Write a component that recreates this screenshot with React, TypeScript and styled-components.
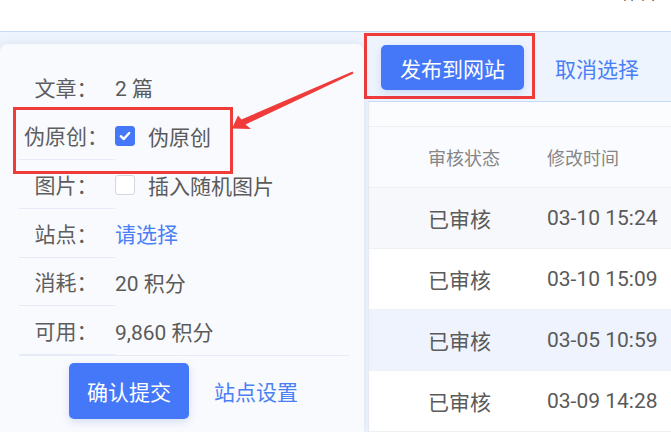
import React from 'react'
import styled, { createGlobalStyle } from 'styled-components'

const GlobalStyle = createGlobalStyle`
  html, body {
    margin: 0;
    padding: 0;
  }
  body {
    width: 671px;
    height: 432px;
    overflow: hidden;
    background: #eef4fd;
    font-family: Roboto, "Noto Sans CJK SC", sans-serif;
  }
  * { box-sizing: border-box; }
`

const Page = styled.div`
  position: relative;
  width: 671px;
  height: 432px;
  overflow: hidden;
  display: flex;
  flex-direction: column;
`

const TopBar = styled.div`
  height: 32px;
  flex-shrink: 0;
  background: #ffffff;
  border-bottom: 1px solid #c7d9f4;
  display: flex;
  justify-content: flex-end;
  padding-right: 14px;
  overflow: hidden;
`

const TopLink = styled.span`
  font-size: 18px;
  line-height: 20px;
  margin-top: -17px;
  color: #333;
`

const Body = styled.div`
  flex: 1;
  min-height: 0;
  display: grid;
  grid-template-columns: 364px 1fr;
  grid-template-rows: 69px 1fr;
`

const Toolbar = styled.div`
  grid-column: 2;
  grid-row: 1;
  display: flex;
  align-items: flex-start;
  padding-top: 1px;
  gap: 20px;
`

const Highlight = styled.div`
  border: 3px solid #f03b3b;
  padding: 9px 8px 6px 14px;
`

const Button = styled.button<{ $h: number; $pad: number }>`
  height: ${p => p.$h}px;
  padding: 0 ${p => p.$pad}px;
  border: none;
  border-radius: 5px;
  background: #4578f9;
  color: #ffffff;
  font-family: inherit;
  font-size: 21px;
  box-shadow: 0 3px 8px rgba(60, 100, 200, 0.18);
  cursor: pointer;
`

const LinkText = styled.span`
  color: #4a7ff5;
  font-size: 21px;
  cursor: pointer;
`

const CancelLink = styled(LinkText)`
  align-self: center;
  margin-top: 2px;
`

const Popover = styled.div`
  grid-column: 1;
  grid-row: 1 / span 2;
  margin-top: 12px;
  z-index: 2;
  background: #f9fafe;
  border-radius: 8px 8px 0 0;
  box-shadow: 0 0 8px rgba(40, 70, 130, 0.1);
  padding: 19px 15px 0 19px;
`

const InfoRow = styled.div<{ $marked?: boolean }>`
  position: relative;
  display: grid;
  grid-template-columns: 96px 1fr;
  align-items: center;
  height: 48.67px;

  &::after {
    content: '';
    display: ${p => (p.$marked ? 'block' : 'none')};
    position: absolute;
    left: -6px;
    top: -5px;
    width: 214px;
    height: 61px;
    border: 3px solid #f03b3b;
    pointer-events: none;
  }
`

const Label = styled.div<{ $divider?: boolean }>`
  height: 100%;
  display: flex;
  align-items: center;
  justify-content: center;
  padding-right: 2px;
  font-size: 21px;
  color: #5e5e5e;
  border-bottom: 1px solid ${p => (p.$divider ? '#e6ebf8' : 'transparent')};
`

const Value = styled.div<{ $link?: boolean }>`
  display: flex;
  align-items: center;
  gap: 13px;
  font-size: 21px;
  color: ${p => (p.$link ? '#4a7ff5' : '#5a5a5a')};
`

const Box = styled.span<{ $checked?: boolean }>`
  width: 20px;
  height: 20px;
  flex-shrink: 0;
  border-radius: 3px;
  display: inline-flex;
  align-items: center;
  justify-content: center;
  background: ${p => (p.$checked ? '#4578f9' : '#ffffff')};
  border: 1px solid ${p => (p.$checked ? '#4578f9' : '#d3d7de')};
`

const Divider = styled.div`
  height: 1px;
  background: #e6ebf8;
`

const Footer = styled.div`
  display: flex;
  justify-content: center;
  align-items: center;
  gap: 25px;
  padding-top: 7px;
  padding-right: 1px;
`

const Table = styled.div`
  grid-column: 2;
  grid-row: 2;
  margin-left: 4px;
  background: #ffffff;
  border-top: 1px solid #c7daf7;
  border-left: 1px solid #e9edf4;
`

const TableGap = styled.div`
  height: 25px;
  background: #fbfcfe;
  border-bottom: 1px solid #edf0f5;
`

const TRow = styled.div<{ $bg?: string; $head?: boolean }>`
  display: grid;
  grid-template-columns: 119px 1fr;
  align-items: center;
  height: 61px;
  padding-left: 59px;
  background: ${p => p.$bg || '#ffffff'};
  border-bottom: 1px solid #edf0f5;
  font-size: ${p => (p.$head ? 18 : 21)}px;
  color: ${p => (p.$head ? '#868686' : '#5a5a5a')};
  white-space: nowrap;
`

const Overlay = styled.svg`
  position: absolute;
  left: 0;
  top: 0;
  z-index: 5;
  pointer-events: none;
`

function Check({ checked }: { checked?: boolean }) {
  return (
    <Box $checked={checked}>
      {checked && (
        <svg width="14" height="14" viewBox="0 0 14 14">
          <polyline points="2.8,7.2 5.8,10 11.2,4" fill="none" stroke="#fff" strokeWidth="2.4" strokeLinecap="round" strokeLinejoin="round" />
        </svg>
      )}
    </Box>
  )
}

const rows = [
  { status: '已审核', time: '03-10 15:24', bg: '#f7f8fb' },
  { status: '已审核', time: '03-10 15:09', bg: '#ffffff' },
  { status: '已审核', time: '03-05 10:59', bg: '#eef3fd' },
  { status: '已审核', time: '03-09 14:28', bg: '#ffffff' }
]

export default function App () {
  return (
    <Page>
      <GlobalStyle />
      <TopBar>
        <TopLink>工作台</TopLink>
      </TopBar>
      <Body>
        <Popover>
          <InfoRow>
            <Label>文章：</Label>
            <Value>2 篇</Value>
          </InfoRow>
          <InfoRow $marked>
            <Label $divider>伪原创：</Label>
            <Value><Check checked />伪原创</Value>
          </InfoRow>
          <InfoRow>
            <Label $divider>图片：</Label>
            <Value><Check />插入随机图片</Value>
          </InfoRow>
          <InfoRow>
            <Label $divider>站点：</Label>
            <Value $link>请选择</Value>
          </InfoRow>
          <InfoRow>
            <Label $divider>消耗：</Label>
            <Value>20 积分</Value>
          </InfoRow>
          <InfoRow>
            <Label $divider>可用：</Label>
            <Value>9,860 积分</Value>
          </InfoRow>
          <Divider />
          <Footer>
            <Button $h={56} $pad={18}>确认提交</Button>
            <LinkText>站点设置</LinkText>
          </Footer>
        </Popover>

        <Toolbar>
          <Highlight>
            <Button $h={45} $pad={19}>发布到网站</Button>
          </Highlight>
          <CancelLink>取消选择</CancelLink>
        </Toolbar>

        <Table>
          <TableGap />
          <TRow $head $bg="#fafbfe">
            <span>审核状态</span>
            <span>修改时间</span>
          </TRow>
          {rows.map((r, i) => (
            <TRow key={i} $bg={r.bg}>
              <span>{r.status}</span>
              <span>{r.time}</span>
            </TRow>
          ))}
        </Table>
      </Body>

      <Overlay width="671" height="432" viewBox="0 0 671 432">
        <polygon
          points="232,128.5 238,115.5 241.5,119.5 352.5,71.5 353.5,73.5 245.5,124.5 251,129"
          fill="#f03b3b"
        />
      </Overlay>
    </Page>
  )
}
